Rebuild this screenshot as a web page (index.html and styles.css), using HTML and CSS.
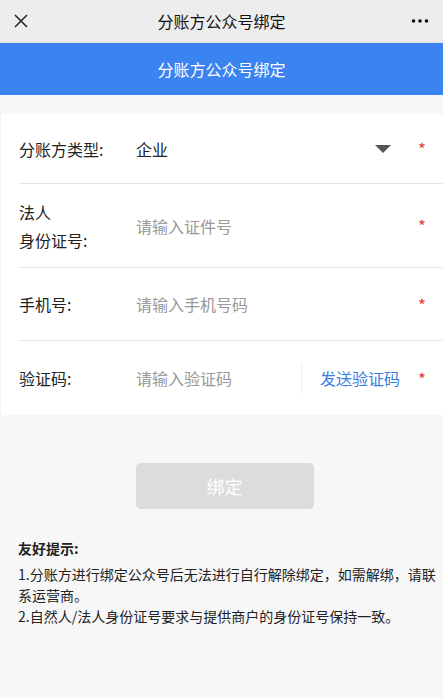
FILE: index.html
```html
<!DOCTYPE html>
<html>

<head>
	<meta charset="utf-8">
	<link rel="stylesheet" href="styles.css">
</head>

<body class="body">

	<div class="navBar">
		<div class="navIcon">
			<svg width="16" height="16" viewBox="0 0 16 16">
				<path d="M2 2 L14 14 M14 2 L2 14" stroke="#222" stroke-width="1.5" fill="none"/>
			</svg>
		</div>
		<div class="navTitle">分账方公众号绑定</div>
		<div class="navIcon navMore">
			<svg width="18" height="6" viewBox="0 0 18 6">
				<circle cx="2.5" cy="3" r="1.8" fill="#111"/>
				<circle cx="9" cy="3" r="1.8" fill="#111"/>
				<circle cx="15.5" cy="3" r="1.8" fill="#111"/>
			</svg>
		</div>
	</div>

	<div class="headerDiv">分账方公众号绑定</div>

	<div class="formDiv">
		<div class="formRow rowType">
			<div class="formLabel">分账方类型:</div>
			<div class="formValue">企业</div>
			<div class="dropArrow"></div>
			<div class="required">*</div>
		</div>
		<div class="formRow rowId">
			<div class="formLabel">法人<br>身份证号:</div>
			<div class="formValue placeholder">请输入证件号</div>
			<div class="required">*</div>
		</div>
		<div class="formRow rowPhone">
			<div class="formLabel">手机号:</div>
			<div class="formValue placeholder">请输入手机号码</div>
			<div class="required">*</div>
		</div>
		<div class="formRow rowCode">
			<div class="formLabel">验证码:</div>
			<div class="formValue placeholder">请输入验证码</div>
			<div class="sendCode">发送验证码</div>
			<div class="required">*</div>
		</div>
	</div>

	<div class="buttonDiv">
		<button class="bindButton">绑定</button>
	</div>

	<div class="tipsDiv">
		<div class="tipsTitle">友好提示:</div>
		<div class="tipsText">1.分账方进行绑定公众号后无法进行自行解除绑定，如需解绑，请联系运营商。</div>
		<div class="tipsText">2.自然人/法人身份证号要求与提供商户的身份证号保持一致。</div>
	</div>

</body>

</html>
```

FILE: styles.css
```css
.body {
	margin: 0;
	width: 443px;
	min-height: 698px;
	background-color: #f7f7f7;
	font-family: "Noto Sans CJK SC", "Noto Sans", sans-serif;
	color: #222;
}

.navBar {
	height: 42px;
	background-color: #ededed;
	display: flex;
	align-items: center;
	justify-content: space-between;
	border-bottom: 1px solid #e0e0e0;
}

.navIcon {
	width: 50px;
	display: flex;
	padding-left: 13px;
	box-sizing: border-box;
}

.navMore {
	justify-content: flex-end;
	padding-left: 0;
	padding-right: 14px;
}

.navTitle {
	font-size: 16px;
	color: #111;
}

.headerDiv {
	height: 52px;
	background-color: #3c83f2;
	color: white;
	font-size: 16px;
	display: flex;
	align-items: center;
	justify-content: center;
}

.formDiv {
	margin-top: 19px;
	background-color: white;
	border-left: 1px solid #f2f2f2;
}

.formRow {
	display: flex;
	align-items: center;
	margin-left: 18px;
	padding-right: 16px;
	border-bottom: 1px solid #e5e5e5;
	font-size: 16px;
}

.rowType {
	height: 69px;
}

.rowId {
	height: 83px;
	line-height: 28px;
}

.rowPhone {
	height: 72px;
}

.rowCode {
	height: 74px;
	border-bottom-style: none;
}

.formLabel {
	width: 117px;
	color: #222;
}

.formValue {
	flex: 1;
	color: #222;
}

.placeholder {
	color: #999;
}

.dropArrow {
	width: 0;
	height: 0;
	border-left: 8px solid transparent;
	border-right: 8px solid transparent;
	border-top: 8px solid #555;
	margin-right: 27px;
}

.sendCode {
	color: #3a7ee4;
	border-left: 1px solid #eee;
	height: 30px;
	line-height: 30px;
	padding-left: 18px;
	margin-right: 18px;
}

.required {
	color: #e64340;
	font-size: 17px;
	width: 9px;
}

.buttonDiv {
	display: flex;
	justify-content: center;
	margin-top: 48px;
	padding-left: 6px;
}

.bindButton {
	width: 178px;
	height: 46px;
	border-style: none;
	border-radius: 5px;
	background-color: #dcdcdc;
	color: white;
	font: 18px "Noto Sans CJK SC", sans-serif;
}

.tipsDiv {
	padding: 29px 6px 0 18px;
	font-size: 14px;
	line-height: 21px;
	color: #222;
}

.tipsTitle {
	font-weight: bold;
	margin-bottom: 5px;
}
```
